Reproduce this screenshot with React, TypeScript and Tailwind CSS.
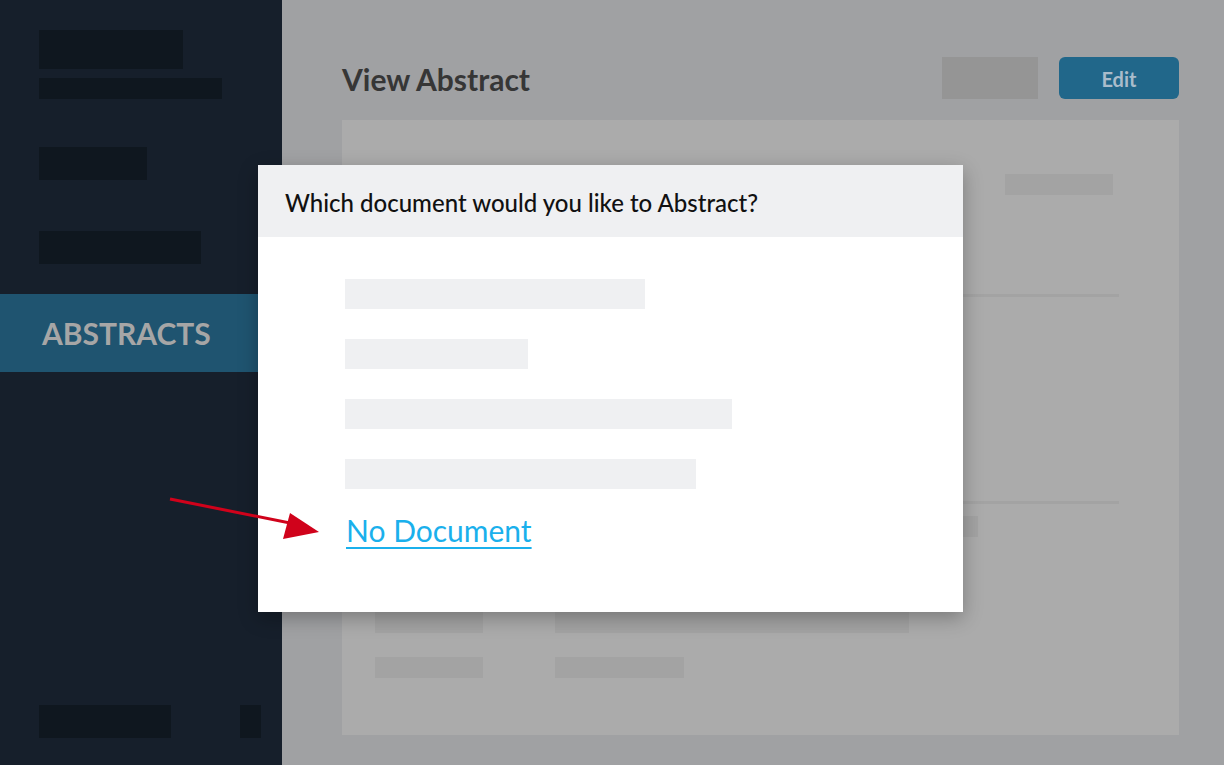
const block = "bg-[#0f171f]";

function Sidebar() {
  return (
    <aside className="w-[282px] shrink-0 bg-[#161f2b] flex flex-col">
      <div className="pl-[39px] pt-[30px]">
        <div className={`${block} w-[144px] h-[39px]`} />
        <div className={`${block} w-[183px] h-[21px] mt-[9px]`} />
        <div className={`${block} w-[108px] h-[33px] mt-[48px]`} />
        <div className={`${block} w-[162px] h-[33px] mt-[51px]`} />
      </div>
      <div className="mt-[30px] h-[78px] bg-[#1f5470] flex items-center pl-[42px]">
        <span className="text-[30px] font-bold text-[#a6a6a6]">ABSTRACTS</span>
      </div>
      <div className="flex-1" />
      <div className="flex justify-between pl-[39px] pr-[21px] pb-[27px]">
        <div className={`${block} w-[132px] h-[33px]`} />
        <div className={`${block} w-[21px] h-[33px]`} />
      </div>
    </aside>
  );
}

function Card() {
  return (
    <div className="mt-[21px] h-[615px] bg-[#ababab] flex flex-col pl-[33px] pr-[60px]">
      <div className="flex justify-end pt-[54px] pr-[6px]">
        <div className="w-[108px] h-[21px] bg-[#a3a3a3]" />
      </div>
      <div className="mt-[99px] h-[3px] bg-[#a3a3a3]" />
      <div className="mt-[204px] h-[3px] bg-[#a3a3a3]" />
      <div className="flex justify-end pr-[141px] mt-[12px]">
        <div className="w-[120px] h-[21px] bg-[#a3a3a3]" />
      </div>
      <div className="mt-[75px] flex flex-col gap-[24px]">
        <div className="flex gap-[72px]">
          <div className="w-[108px] h-[21px] bg-[#a3a3a3]" />
          <div className="w-[354px] h-[21px] bg-[#a3a3a3]" />
        </div>
        <div className="flex gap-[72px]">
          <div className="w-[108px] h-[21px] bg-[#a3a3a3]" />
          <div className="w-[129px] h-[21px] bg-[#a3a3a3]" />
        </div>
      </div>
    </div>
  );
}

function Modal() {
  const bars = [300, 183, 387, 351];
  return (
    <div className="absolute left-[258px] top-[165px] w-[705px] h-[447px] bg-white shadow-[0_6px_18px_rgba(0,0,0,0.28)] z-10">
      <div className="h-[72px] bg-[#eff0f2] flex items-center pl-[27px] pt-[3px]">
        <h2 className="text-[24px] text-[#111] font-medium">Which document would you like to Abstract?</h2>
      </div>
      <div className="pl-[87px] pt-[42px] flex flex-col gap-[30px]">
        {bars.map((w, i) => (
          <div key={i} className="h-[30px] bg-[#eff0f2]" style={{ width: w }} />
        ))}
      </div>
      <a href="#" className="block ml-[88px] mt-[21px] w-max text-[30px] leading-[40px] text-[#1ab0ec] underline decoration-2 underline-offset-[5px]">
        No Document
      </a>
    </div>
  );
}

function Arrow() {
  return (
    <svg className="absolute left-[160px] top-[488px] z-20" width="170" height="60" viewBox="0 0 170 60">
      <line x1="10" y1="11" x2="140" y2="37" stroke="#d0021b" strokeWidth="3" />
      <polygon points="159,44 130,25 123,51" fill="#d0021b" />
    </svg>
  );
}

export default function App() {
  return (
    <div className="relative w-[1224px] h-[765px] flex overflow-hidden font-['Lato',sans-serif]">
      <Sidebar />
      <main className="flex-1 bg-[#a0a1a3] pl-[60px] pr-[45px] pt-[57px]">
        <div className="flex items-center h-[42px]">
          <h1 className="text-[30px] font-bold text-[#363636] flex-1 pt-[2px]">View Abstract</h1>
          <div className="w-[96px] h-[42px] bg-[#959595]" />
          <button className="ml-[21px] w-[120px] h-[42px] pt-[2px] rounded-[6px] bg-[#21678a] text-[20px] font-bold text-[#a9bccb]">
            Edit
          </button>
        </div>
        <Card />
      </main>
      <Modal />
      <Arrow />
    </div>
  );
}
